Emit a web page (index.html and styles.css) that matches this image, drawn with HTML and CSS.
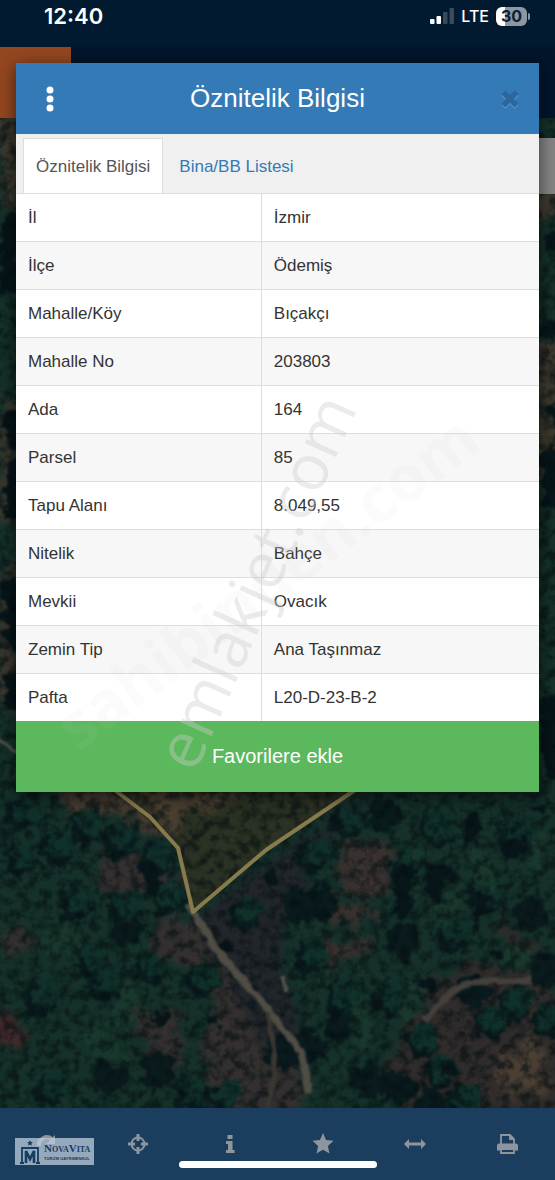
FILE: index.html
```
<!DOCTYPE html>
<html lang="tr">
<head>
    <meta charset="UTF-8">
    <meta name="viewport" content="width=device-width, initial-scale=1.0">
    <title>Öznitelik Bilgisi</title>
    <link rel="stylesheet" href="styles.css">
</head>
<body>
<div class="screen">

    <!-- satellite map -->
    <svg class="map" viewBox="0 0 555 1180" preserveAspectRatio="xMidYMin slice" aria-hidden="true">
        <defs>
            <filter id="rough" x="-5%" y="-5%" width="110%" height="110%" color-interpolation-filters="sRGB">
                <feTurbulence type="fractalNoise" baseFrequency="0.09" numOctaves="3" seed="4" result="n"/>
                <feDisplacementMap in="SourceGraphic" in2="n" scale="22" xChannelSelector="R" yChannelSelector="G"/>
                <feGaussianBlur stdDeviation="1"/>
            </filter>
            <filter id="soft" x="-5%" y="-5%" width="110%" height="110%" color-interpolation-filters="sRGB">
                <feTurbulence type="fractalNoise" baseFrequency="0.05" numOctaves="3" seed="9" result="n"/>
                <feDisplacementMap in="SourceGraphic" in2="n" scale="34" xChannelSelector="R" yChannelSelector="G"/>
                <feGaussianBlur stdDeviation="3"/>
            </filter>
            <filter id="path" x="-5%" y="-5%" width="110%" height="110%" color-interpolation-filters="sRGB">
                <feTurbulence type="fractalNoise" baseFrequency="0.06" numOctaves="2" seed="4" result="n"/>
                <feDisplacementMap in="SourceGraphic" in2="n" scale="8" xChannelSelector="R" yChannelSelector="G"/>
                <feGaussianBlur stdDeviation="1"/>
            </filter>
            <filter id="grain" x="0" y="0" width="100%" height="100%" color-interpolation-filters="sRGB">
                <feTurbulence type="fractalNoise" baseFrequency="0.1" numOctaves="4" seed="2"/>
                <feColorMatrix values="0 0 0 0 0.02  0 0 0 0 0.06  0 0 0 0 0.07  3 0 0 0 -1.2"/>
            </filter>
        </defs>
        <rect width="555" height="1180" fill="#15312a"/>

        <!-- bare soil -->
        <g filter="url(#soft)">
            <path fill="#3e392f" d="M0 110h24v100H0zM0 395h18v130H0zM0 560h18v150H0zM533 190h30v28h-30zM535 340h25v150h-25z"/>
            <path fill="#443a31" d="M55 780h120l10 50-28 6-40-22-55-6z"/>
            <path fill="#353030" d="M102 850l36-12 10 30 40 8-6 18H95zM150 925l50-6 20 30-16 28-50-12zM210 960l60 50 30 50 4 60h-90l-10-50zM136 1010l44 10 4 50-36 4zM5 925h24v22H5z"/>
            <path fill="#41292b" d="M-4 1010l22 6 4 30-26 4z"/>
            <path fill="#22262b" d="M192 920l75-58 90-68 10 24-56 38-10 50-20 30 20 120-40-10-50-100z"/>
            <path fill="#38312f" d="M338 846l46-6 14 20-10 32-40 2-10-26zM318 898l30 10 36 2-4 12-60-2zM320 950l40-14 8 10-40 22z"/>
            <path fill="#302c2b" d="M440 970l60-8 44 16 20 60v80H400l4-80zM500 915l20 20 24 16-6 8-36-14zM394 1040l20 10-6 40-16-8z"/>
            <path fill="#4b3f33" d="M500 1060l24-20 24 14-4 34-30 12-20-14z"/>
        </g>

        <!-- parcel field -->
        <path fill="#303222" opacity=".85" d="M118 792l59 56 16 64 73-62 86-58z"/>
        <g filter="url(#soft)">
            <path fill="#4a3f30" d="M140 790h110l-30 18-36 4-6 28-20-16z"/>
        </g>

        <!-- tree shadows, then crowns -->
        <g fill="none" stroke-linecap="round" filter="url(#rough)">
            <path stroke="#0a1b1d" stroke-width="34" d="M86 828h0M58 850h0M120 842h0M156 858h0M76 905h0M124 910h0M168 898h0M92 960h0M40 1000h0M150 970h0M202 980h0M244 914h0M104 985h0M126 930h0M20 860h0M50 1090h0M110 1075h0M22 815h0M158 1070h0M312 855h0M348 822h0M385 815h0M436 830h0M515 835h0M405 870h0M440 880h0M402 940h0M450 935h0M485 895h0M530 915h0M390 1000h0M340 1000h0M310 960h0M545 970h0M340 1025h0M422 1040h0M490 1022h0M515 1005h0M548 1022h0M474 990h0M440 1072h0M465 1102h0M430 1104h0M398 1088h0M366 1080h0M308 1048h0M282 1052h0M190 1095h0M222 1100h0M320 905h0M300 905h0"/>
            <path stroke="#10302a" stroke-width="28" d="M90 822h0M62 845h0M124 836h0M160 852h0M80 900h0M128 905h0M170 894h0M96 955h0M45 995h0M154 965h0M206 975h0M250 908h0M108 980h0M25 855h0M55 1085h0M28 810h0M318 848h0M352 818h0M440 826h0M520 830h0M410 865h0M455 930h0M490 890h0M395 995h0M345 995h0M316 955h0M426 1036h0M494 1018h0M519 1000h0M550 1018h0M444 1068h0M470 1098h0M196 1090h0M228 1095h0"/>
            <path stroke="#08161a" stroke-width="15" d="M150 870l4 14M225 948h0M160 1018h0M405 868l-2 40M438 870l-4 22M515 840l-2 12M472 820v18M485 900l-6 16M448 1070h0M396 1086h0M270 878h0M213 1018h0M430 985h0M498 955h0M540 810h0"/>
            <path stroke="#1d3f2f" stroke-width="20" d="M130 990l-10 40M95 1040l24 20M50 940h20M455 890l-14 30M418 850h0M515 955h14M480 860l10 20M540 840l-4 20M412 990l-6 22M360 1010l4 30" opacity=".5"/>
            <path stroke="#07161a" stroke-width="20" d="M12 225l-4 60M14 420v20M14 470v40M10 590l6 50M14 680v20M555 240h0M556 415h0M548 460l6 40M548 700l6 70M548 330h0"/>
        </g>
        <rect width="555" height="1180" filter="url(#grain)" opacity=".6"/>

        <!-- tracks -->
        <g fill="none" stroke-linejoin="round" filter="url(#path)">
            <path stroke="#504d45" stroke-width="7" d="M188 904l27 44 50 58 22 28 14 18 8 40"/>
            <path stroke="#3b3733" stroke-width="5" d="M268 1012l6 40-4 54"/>
            <path stroke="#44403b" stroke-width="7" d="M424 1020l24-24 22-14 62-2"/>
            <path stroke="#57534c" stroke-width="4" d="M284 976v18M-2 738l20 16"/>
        </g>

        <path fill="none" stroke="#877a4c" stroke-width="4" stroke-linejoin="round" d="M112 788l38 29 28 31 15 64 73-62 92-62"/>
    </svg>

    <header class="status-bar">
        <span class="clock">12:40</span>
        <div class="status-icons">
            <svg width="24" height="16" viewBox="0 0 24 16" aria-hidden="true">
                <rect x="0" y="11" width="4.500" height="5" rx="1" fill="#fff"/>
                <rect x="6.500" y="8" width="4.500" height="8" rx="1" fill="#fff"/>
                <rect x="13" y="4" width="4.500" height="12" rx="1" fill="#3a4a5b"/>
                <rect x="19.500" y="0" width="4.500" height="16" rx="1" fill="#3a4a5b"/>
            </svg>
            <span class="network">LTE</span>
            <span class="battery">30</span>
        </div>
    </header>

    <div class="app-bar"><div class="app-menu"></div></div>
    <div class="side-tab"></div>

    <section class="dialog" role="dialog" aria-labelledby="dialog-title">
        <div class="dialog-header">
            <button class="icon-button menu" type="button" aria-label="Menü">
                <svg width="8" height="26" viewBox="0 0 8 26"><g fill="#fff"><circle cx="4" cy="4" r="3.500"/><circle cx="4" cy="13" r="3.500"/><circle cx="4" cy="22" r="3.500"/></g></svg>
            </button>
            <h1 id="dialog-title">Öznitelik Bilgisi</h1>
            <button class="icon-button close" type="button" aria-label="Kapat">
                <svg width="22" height="22" viewBox="0 0 20 20"><path d="M4 5l12 12M16 5L4 17" stroke="#5b9ad0" stroke-width="5"/><path d="M4 4l12 12M16 4L4 16" stroke="#2d669c" stroke-width="5"/></svg>
            </button>
        </div>

        <nav class="tabs">
            <a class="tab active" href="#oznitelik">Öznitelik Bilgisi</a>
            <a class="tab" href="#bina">Bina/BB Listesi</a>
        </nav>

        <table class="attributes" id="oznitelik">
            <tr><th scope="row">İl</th><td>İzmir</td></tr>
            <tr><th scope="row">İlçe</th><td>Ödemiş</td></tr>
            <tr><th scope="row">Mahalle/Köy</th><td>Bıçakçı</td></tr>
            <tr><th scope="row">Mahalle No</th><td>203803</td></tr>
            <tr><th scope="row">Ada</th><td>164</td></tr>
            <tr><th scope="row">Parsel</th><td>85</td></tr>
            <tr><th scope="row">Tapu Alanı</th><td>8.049,55</td></tr>
            <tr><th scope="row">Nitelik</th><td>Bahçe</td></tr>
            <tr><th scope="row">Mevkii</th><td>Ovacık</td></tr>
            <tr><th scope="row">Zemin Tip</th><td>Ana Taşınmaz</td></tr>
            <tr><th scope="row">Pafta</th><td>L20-D-23-B-2</td></tr>
        </table>

        <button class="favorite" type="button">Favorilere ekle</button>

        <svg class="watermark" viewBox="0 0 523 729" aria-hidden="true">
            <text class="mark-back" transform="translate(62 690) rotate(-37)">sahibinden.com</text>
            <text class="mark-front" transform="translate(179 711) rotate(-66)">emlakjet.com</text>
        </svg>
    </section>

    <footer class="toolbar">
        <button class="tool" type="button" aria-label="Yenile">
            <svg width="24" height="24" viewBox="0 0 24 24"><path d="M5 14a8 8 0 0 1 13-7" fill="none" stroke="currentColor" stroke-width="4"/><path d="M21 3v9h-9z" fill="currentColor"/></svg>
        </button>
        <button class="tool" type="button" aria-label="Konum">
            <svg width="24" height="24" viewBox="0 0 24 24"><circle cx="12" cy="12" r="6.500" fill="none" stroke="currentColor" stroke-width="2"/><path d="M12 2v7M12 15v7M2 12h7M15 12h7" stroke="currentColor" stroke-width="3"/></svg>
        </button>
        <button class="tool" type="button" aria-label="Bilgi">
            <svg width="24" height="24" viewBox="0 0 24 24"><path fill="currentColor" d="M9.500 3h5v4h-5zM8 9h6.500v9H16.500v3H8v-3h2v-6H8z"/></svg>
        </button>
        <button class="tool" type="button" aria-label="Favoriler">
            <svg width="24" height="24" viewBox="0 0 24 24"><path fill="currentColor" d="M12 1l3 7 7.500.800-5.600 5.100L18.500 21.500 12 17.700 5.500 21.500l1.600-7.600L1.500 8.800 9 8z"/></svg>
        </button>
        <button class="tool" type="button" aria-label="Ölçüm">
            <svg width="24" height="24" viewBox="0 0 24 24"><path fill="currentColor" d="M1 12l5-5v3.500h12V7l5 5-5 5v-3.500H6V17z"/></svg>
        </button>
        <button class="tool" type="button" aria-label="Yazdır">
            <svg width="24" height="24" viewBox="0 0 24 24"><g fill="none" stroke="currentColor" stroke-width="1.800"><path d="M6 12V3h9l4 4v5M15 3v4h4"/><path d="M6 17v4h13v-4z"/></g><path fill="currentColor" d="M4 11.500h17q2 0 2 2V18.500h-3v-2H5v2H2v-5q0-2 2-2z"/></svg>
        </button>

        <div class="brand">
            <svg width="20" height="24" viewBox="0 0 20 24" aria-hidden="true"><path fill="#173c61" d="M10 0l.900 2 2.100.200-1.600 1.400.500 2.100L10 4.600 8.100 5.700l.500-2.100L7 2.200 9.100 2z"/><path fill="none" stroke="#173c61" stroke-width="1.800" d="M2 23V8h16V23M0 23h4M16 23h4"/><path fill="none" stroke="#173c61" stroke-width="2.600" d="M6 23V11l4 8 4-8v12"/></svg>
            <span class="brand-text">
                <span class="brand-name">N<small>OVA</small>V<small>ITA</small></span>
                <span class="brand-line">TURİZM GAYRİMENKUL</span>
            </span>
        </div>
        <div class="home-indicator"></div>
    </footer>
</div>
</body>
</html>
```
FILE: styles.css
```
* {
    box-sizing: border-box;
}
body {
    margin: 0;
    font-family: "Liberation Sans", Arial, Helvetica, sans-serif;
    background: #13302a;
}
button {
    border: 0;
    padding: 0;
    font-family: inherit;
    background: none;
}
svg {
    display: block;
}
.screen {
    position: relative;
    display: flex;
    flex-direction: column;
    min-height: 100vh;
    overflow: hidden;
}
.map {
    position: absolute;
    top: 0;
    left: 0;
    width: 100%;
    height: 100%;
}

/* status bar */
.status-bar {
    position: relative;
    display: flex;
    justify-content: space-between;
    height: 47px;
    padding: 4px 28px 0 44px;
    color: #fff;
    background: #021a30;
    font-family: Inter, "Liberation Sans", sans-serif;
    line-height: 24px;
}
.clock {
    font-size: 22px;
    font-weight: 600;
}
.status-icons {
    display: flex;
    align-items: center;
    gap: 7px;
    height: 24px;
}
.network {
    font-size: 16px;
    font-weight: 500;
}
.battery {
    position: relative;
    width: 31px;
    border-radius: 6px;
    color: #0b2036;
    background: linear-gradient(90deg, #fff 30%, #8d96a1 30%);
    font-size: 16px;
    font-weight: 700;
    line-height: 19px;
    text-align: center;
}
.battery::after {
    content: "";
    position: absolute;
    top: 6px;
    right: -3px;
    width: 2px;
    height: 7px;
    border-radius: 0 2px 2px 0;
    background: #8d96a1;
}

/* page behind the dialog */
.app-bar {
    position: relative;
    height: 71px;
    background: #02152b;
}
.app-menu {
    width: 71px;
    height: 71px;
    background: #944720;
}
.side-tab {
    position: relative;
    align-self: flex-end;
    width: 40px;
    height: 56px;
    margin-top: 20px;
    background: #858585;
}

/* dialog */
.dialog {
    position: absolute;
    top: 63px;
    left: 16px;
    right: 16px;
    background: #fff;
    box-shadow: 0 4px 16px rgba(0, 0, 0, .6);
}
.dialog-header {
    display: grid;
    grid-template-columns: 1fr auto 1fr;
    align-items: center;
    height: 71px;
    padding: 0 7px;
    color: #fff;
    background: #337ab7;
}
.dialog-header h1 {
    margin: 0;
    font-size: 26px;
    font-weight: normal;
}
.icon-button {
    display: flex;
    align-items: center;
    justify-content: center;
    width: 44px;
    height: 44px;
}
.icon-button.menu {
    margin-left: 5px;
}
.icon-button.close {
    justify-self: end;
}
.tabs {
    display: flex;
    align-items: flex-end;
    height: 60px;
    padding-left: 7px;
    border-bottom: 1px solid #ddd;
    background: #f0f0f0;
}
.tab {
    height: 55px;
    padding: 0 12px;
    border: 1px solid transparent;
    border-bottom: 0;
    color: #337ab7;
    font-size: 17px;
    line-height: 56px;
    text-decoration: none;
}
.tab.active {
    margin-right: 3px;
    border-color: #ddd;
    color: #555;
    background: #fff;
}
.attributes {
    width: 100%;
    border-collapse: separate;
    border-spacing: 0;
    color: #333;
    font-size: 17px;
}
.attributes th,
.attributes td {
    height: 48px;
    padding: 0 12px;
    border-bottom: 1px solid #ddd;
    font-weight: normal;
    text-align: left;
}
.attributes th {
    width: 47%;
    border-right: 1px solid #ddd;
}
.attributes tr:nth-child(even) {
    background: #f7f7f7;
}
.attributes tr:last-child th,
.attributes tr:last-child td {
    height: 47px;
    border-bottom: 0;
}
.favorite {
    display: block;
    width: 100%;
    height: 71px;
    color: #fff;
    background: #5cb85c;
    font-size: 20px;
}
.watermark {
    position: absolute;
    top: 0;
    left: 0;
    width: 100%;
    height: 100%;
    pointer-events: none;
}
.mark-front {
    fill: #ccc;
    fill-opacity: .4;
    font: 64px "Open Sans", sans-serif;
}
.mark-back {
    fill: #ccc;
    fill-opacity: .08;
    font: bold 64px "Open Sans", sans-serif;
}

/* bottom toolbar */
.toolbar {
    position: relative;
    display: flex;
    height: 72px;
    margin-top: auto;
    padding-right: 2px;
    background: #1c3e5e;
}
.tool {
    display: flex;
    flex: 1;
    align-items: center;
    justify-content: center;
    color: #8f959d;
}
.brand {
    position: absolute;
    left: 15px;
    bottom: 15px;
    display: flex;
    align-items: center;
    gap: 4px;
    width: 79px;
    height: 27px;
    padding-left: 5px;
    color: #173c61;
    background: rgba(190, 205, 222, .75);
}
.brand-text {
    display: flex;
    flex-direction: column;
    white-space: nowrap;
}
.brand-name {
    font-family: "Liberation Serif", serif;
    font-size: 11px;
    font-weight: bold;
    line-height: 12px;
}
.brand-name small {
    font-size: 8px;
}
.brand-line {
    font-size: 4px;
    font-weight: bold;
    line-height: 5px;
}
.home-indicator {
    position: absolute;
    left: 50%;
    bottom: 12px;
    width: 198px;
    height: 7px;
    margin-left: -99px;
    border-radius: 4px;
    background: #fff;
}
```
